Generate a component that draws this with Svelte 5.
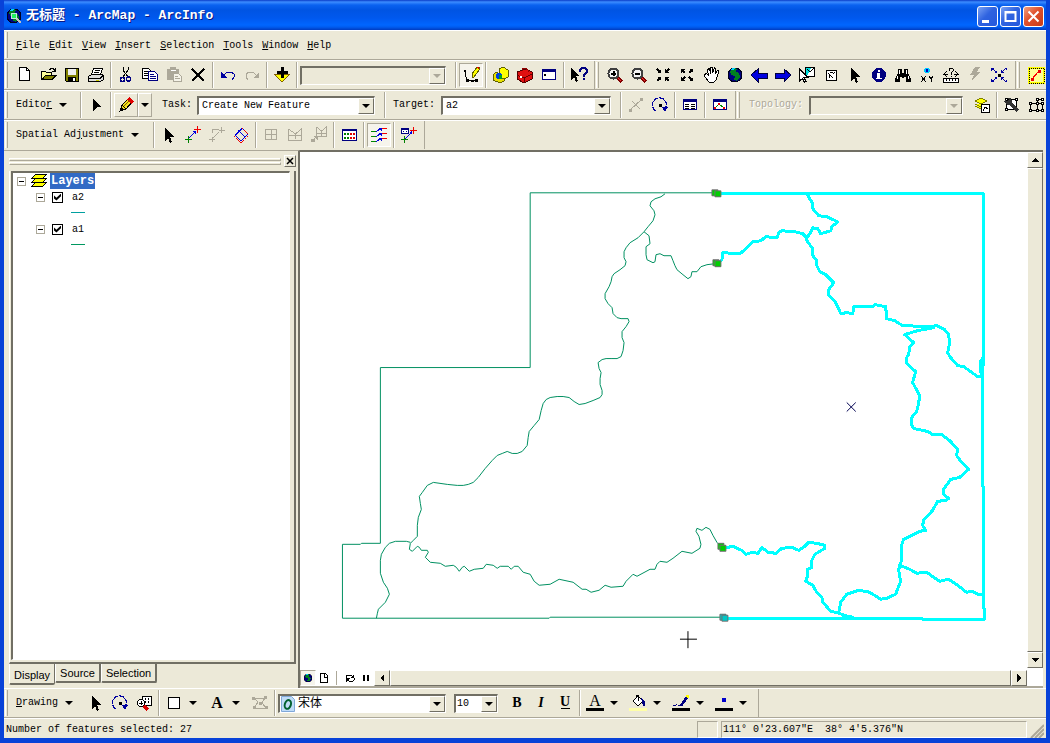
<script lang="ts">
  type Item = string | { icon: string; state?: 'pressed' | 'disabled'; drop?: boolean };

  const off = (icon: string): Item => ({ icon, state: 'disabled' });
  const on = (icon: string): Item => ({ icon, state: 'pressed' });
  const drop = (icon: string): Item => ({ icon, drop: true });

  let menus = ['File', 'Edit', 'View', 'Insert', 'Selection', 'Tools', 'Window', 'Help'];

  // '|' is a separator
  let fileTools: Item[] = ['new', 'open', 'save', 'print', '|', 'cut', 'copy', off('paste'), 'delete', '|', 'undo', off('redo'), '|', 'add', '|'];
  let windowTools: Item[] = [on('sketch'), '|', 'catalog', 'toolbox', 'command', '|', 'help'];
  let navTools: Item[] = ['zoomin', 'zoomout', 'fixedin', 'fixedout', 'pan', 'globe', 'back', 'forward', 'selectfeature', 'clear', 'pointer', 'info', 'find', 'xy', 'measure', off('hyperlink'), 'extent'];
  let adjustTools: Item[] = ['|', 'pointer', 'link', off('modify'), 'adjust', '|', off('grid'), off('edgematch'), off('edgesnap'), '|', 'linktable', '|', on('multilink'), '|', 'attrib'];
  let editTools: Item[] = ['|', off('split'), 'rotate', '|', 'attributes', '|', 'sketchprops'];
  let drawTools: Item[] = ['pointer', 'rotate', 'zoomsel', '|', drop('rect'), drop('text'), off('vertices'), '|'];
  let fontTools: Item[] = ['bold', 'italic', 'underline', '|', drop('fontcolor'), drop('fill'), drop('line'), drop('marker')];

  let layers = $state([
    { name: 'a2', visible: true, color: '#00a0a0' },
    { name: 'a1', visible: true, color: '#009860' }
  ]);
  let tabs = ['Display', 'Source', 'Selection'];
  let tab = $state('Display');

  const win = '<path d="M2 3h14v11H2z" fill="#fff"/><path d="M2.500 3.500h13v10h-13z" fill="none" stroke="#000080"/><path d="M2 3h14v3H2z" fill="#000080"/>';
  const lens = '<path d="M11 11l5 5" stroke="#800000" stroke-width="3"/><path d="M11 11l4 4" stroke="#f03030"/><circle cx="7.500" cy="7.500" r="5" fill="#f4f4f4" stroke="#404040" stroke-width="2"/>';
  const turn = '<path d="M5 15A7 7 0 1 1 14 13" fill="none" stroke="#0000a0" stroke-width="1.200" stroke-dasharray="5 1"/><path d="M11 11h6l-3 5z" fill="#0000a0"/><path d="M8 8h3v3H8z" fill="#000"/>';
  const arrow = '<path d="M5 2v13l3-3 2 5 2-1-2-5h4z" fill="#000"/>';
  const world = '<circle cx="9" cy="9" r="7" fill="#000080" stroke="#000020"/><path d="M4 5l4-3 3 1-1 3 3 1 1 4-3 4-3-1 1-4-4-1z" fill="#008020"/><path d="M4 4l3-2h3L7 4z" fill="#00d0ff"/>';

  const icons: Record<string, string> = {
    new: '<path d="M4.500 1.500h7l3 3v10h-10z" fill="#fff" stroke="#000"/><path d="M11.500 1.500v3h3" fill="none" stroke="#000"/>',
    open: '<path d="M2 5h4l1 1h6v3H6l-4 5z" fill="#ff9"/><path d="M2.500 14V5.500h4l1 1h5V9" fill="none" stroke="#000"/><path d="M3 13.500l3.500-4H17l-4 4z" fill="#808000" stroke="#000"/><path d="M10 3.500h1l1-1h2l2 2M16.500 2v3.500H13" fill="none" stroke="#000"/>',
    save: '<path d="M2.500 2.500h13v13h-12l-1-1z" fill="#808000" stroke="#000"/><path d="M5 3h8v6H5z" fill="#eee"/><path d="M5 11h8v5H5z" fill="#000"/><path d="M10 12h2v3h-2z" fill="#fff"/>',
    print: '<path d="M6.500 2.500h9l-2 6h-9z" fill="#fff" stroke="#000"/><path d="M8 4.500h5M7 6.500h5" stroke="#000"/><path d="M1.500 10.500l3-2h11l1 1v4l-3 2h-12z" fill="#ddd" stroke="#000"/><path d="M2 12.500h11l3-3" stroke="#000" fill="none"/><path d="M9 14h3" stroke="#cc0"/>',
    cut: '<path d="M6 1v3l5 7M11 1v3L6 11" stroke="#000" fill="none"/><circle cx="5.500" cy="13.500" r="2" fill="none" stroke="#000080" stroke-width="1.500"/><circle cx="11.500" cy="13" r="2" fill="none" stroke="#000080" stroke-width="1.500"/>',
    copy: '<path d="M1.500 2.500h6l3 3v7h-9z" fill="#fff" stroke="#000"/><path d="M3 5.500h4M3 7.500h5M3 9.500h5" stroke="#000"/><path d="M7.500 5.500h6l3 3v6h-9z" fill="#fff" stroke="#000080"/><path d="M9 8.500h4M9 10.500h6M9 12.500h6" stroke="#000080"/>',
    paste: '<path d="M2 3h12v11H2z" fill="#aca899"/><path d="M5 1h6v4H5z" fill="#aca899"/><path d="M6 4h5" stroke="#fff"/><path d="M8.500 7.500h5l3 3v5h-8z" fill="#f5f3e8" stroke="#aca899"/><path d="M10 10.500h3M10 12.500h5" stroke="#aca899"/>',
    delete: '<path d="M3 3l12 12M15 3L3 15" stroke="#000" stroke-width="2"/>',
    undo: '<path d="M2 6v6h6z" fill="#0000a0"/><path d="M4 10l4-4h4l3 2v3l-2 3" fill="none" stroke="#0000a0"/>',
    redo: '<path d="M16 6v6h-6z" fill="#aca899"/><path d="M14 10l-4-4H6L3 8v3l2 3" fill="none" stroke="#aca899"/>',
    add: '<path d="M1 8h16l-8 8z" fill="#ff0" stroke="#806000"/><path d="M8 1h3v4h4v3h-4v4H8V8H4V5h4z" fill="#000"/>',
    sketch: '<path d="M3 6l2 9 9-1" fill="none" stroke="#000"/><path d="M2 4h2v2H2zM4 13h3v3H4zM13 13h3v3h-3zM9 14h3v2H9z"/><path d="M10 11V8l5-7h2v3l-5 7z" fill="#ff0" stroke="#606000"/><path d="M14 1h3v3z" fill="#d00"/>',
    catalog: '<path d="M1 9l3-3 8 5v4l-4 2-7-3z" fill="#e8e000" stroke="#606000"/><path d="M7 3l4-2 5 3v7l-4 2-5-3z" fill="#ff0" stroke="#606000"/><circle cx="7" cy="10" r="3" fill="#0040e0"/><path d="M7 9h3v4H7z" fill="#00a020"/>',
    toolbox: '<path d="M1 6l9-3 6 3v7l-8 4-7-4z" fill="#e01010" stroke="#500000"/><path d="M1 9l7 3 8-4M8 12v5" stroke="#600" fill="none"/><path d="M6 5V3l3-1 3 2v2" fill="none" stroke="#900000"/><path d="M4 10h2v2H4z" fill="#fff"/>',
    command: win + '<path d="M4 8l2 1-2 1" stroke="#000" fill="none"/>',
    help: '<path d="M1 2v12l3-3 2 5 2-1-2-5h4z" fill="#000"/><path d="M10 6V4l2-2h3l2 2v2l-3 3v2" fill="none" stroke="#000080" stroke-width="2"/><path d="M13 12h2v2h-2z" fill="#000080"/>',
    zoomin: lens + '<path d="M5 7.500h5M7.500 5v5" stroke="#000" stroke-width="2"/>',
    zoomout: lens + '<path d="M5 7.500h5" stroke="#000" stroke-width="2"/>',
    fixedin: '<path d="M3 3l3 3M15 3l-3 3M3 15l3-3M15 15l-3-3" stroke="#000" stroke-width="1.500"/><path d="M3 7h4V3zM15 7h-4V3zM3 11h4v4zM15 11h-4v4z"/>',
    fixedout: '<path d="M4 4l3 3M14 4l-3 3M4 14l3-3M14 14l-3-3" stroke="#000" stroke-width="1.500"/><path d="M3 3h4L3 7zM15 3h-4l4 4zM3 15h4l-4-4zM15 15h-4l4-4z"/>',
    pan: '<path d="M2.500 8.500l2-1 2 2-1-6 2-1 1 5V1.500h2V7l2-5 1.500 1-1 5 3-4 1 1-3 9-2 2h-5l-4-5z" fill="#fff" stroke="#000"/>',
    globe: world,
    back: '<path d="M1 9l7-6v4h9v5H8v4z" fill="#0000e0" stroke="#000040"/>',
    forward: '<path d="M17 9l-7-6v4H1v5h9v4z" fill="#0000e0" stroke="#000040"/>',
    selectfeature: '<path d="M7.500 1.500h9v9h-9z" fill="#fff" stroke="#000"/><path d="M8 2h5l-4 8H8z" fill="#0dd"/><path d="M9 3l3 3 4-4" stroke="#000" fill="none"/><path d="M1.500 3v12l3-2.500 2 4 1.500-1-2-4h4z" fill="#fff" stroke="#000"/>',
    clear: '<path d="M4.500 4.500h10v10h-10z" fill="#fff" stroke="#000"/><path d="M6 7l5 5M8 6h3M11 8l2-2M7 9v3" stroke="#000" fill="none"/>',
    pointer: arrow,
    info: '<circle cx="9" cy="9" r="7" fill="#000080"/><path d="M7 7h3v6H7zM8 4h2v2H8zM6 12h6v1H6z" fill="#fff"/>',
    find: '<path d="M4 3h4v4h2V3h4v4l3 6v3h-5v-5h-2v1H8v-1H6v5H1v-3l3-6z" fill="#000"/><path d="M5 4v4M12 4v4M3 10v3M14 10v3" stroke="#fff"/>',
    xy: '<circle cx="9" cy="4.500" r="3" fill="#00c8ff"/><path d="M8 3h2v3H8z" fill="#0000c0"/><path d="M3 10l5 6M8 10l-5 6M11 10l2 3 2-3M13 13v3" stroke="#000" fill="none"/>',
    measure: '<path d="M1.500 12.500h15v4h-15z" fill="#fff" stroke="#000"/><path d="M4.500 13v2M7.500 13v2M10.500 13v2M13.500 13v2" stroke="#000"/><path d="M1 8h5M12 8h5M2 8l3-3M2 8l3 3M16 8l-3-3M16 8l-3 3M7 5V3l2-1 2 1v2L9 7v2M9 10v1" stroke="#000" fill="none"/>',
    hyperlink: '<path d="M9 1h5l-3 5h3L5 16l3-7H4z" fill="#aca899"/>',
    extent: '<path d="M3 3l4 4M15 3l-4 4M3 15l4-4M15 15l-4-4" stroke="#0000a0"/><path d="M1 2h3L1 5zM17 2h-3l3 3zM1 16h3l-3-3zM17 16h-3l3-3zM4 7h3V4zM14 7h-3V4zM4 11h3v3zM14 11h-3v3z" fill="#0000a0"/><path d="M8 8h3v3H8z" fill="#000"/>',
    editextent: '<path d="M2 2h15v15H2z" fill="#ff9"/><path d="M2 2h15v15H2z" fill="none" stroke="#ff0" stroke-width="2"/><path d="M2 2h15v15H2z" fill="none" stroke="#000" stroke-dasharray="1 1"/><path d="M5 13l7-8" stroke="#f00"/><path d="M4 12h3v3H4zM11 4h3v3h-3z" fill="#e00"/>',
    pencil: '<path d="M3 15l2-6 7-7 4 3-7 8z" fill="#f0e020" stroke="#000"/><path d="M12 1l5 4-3 3-4-4z" fill="#e00000"/><path d="M5 9l4 4" stroke="#000"/><path d="M2 16l2-5 3 3z" fill="#000"/><path d="M7 10l6-6" stroke="#806000"/>',
    editpointer: '<path d="M6 3v12l4-4h4z" fill="#000"/>',
    split: '<path d="M3 14L15 3M5 5l8 8" stroke="#aca899"/><path d="M2 13h3v3H2zM13 2h3v3h-3z" fill="#aca899"/>',
    rotate: turn,
    attributes: win + '<path d="M4 8h4M10 8h4M4 10h4M10 10h4M4 12h4M10 12h4" stroke="#000"/>',
    sketchprops: win + '<path d="M4 12l4-4 5 4" stroke="#080" fill="none"/><path d="M3 11h2v2H3zM12 11h2v2h-2zM7 7h2v2H7z" fill="#e00"/>',
    maptopo: '<path d="M2 5l6-3 6 3-6 3zM2 8l6 3 6-3M2 10l6 3 6-3" fill="#ff0" stroke="#808000"/><path d="M8.500 8.500h8v8h-8z" fill="#fff" stroke="#000"/><path d="M10 15l2-4 3 2" stroke="#000" fill="none"/>',
    fixtopo: '<path d="M3.500 3.500h10v10h-10z" fill="#fff" stroke="#000"/><path d="M2.500 2.500h2v2h-2zM12.500 2.500h2v2h-2zM12.500 12.500h2v2h-2zM2.500 12.500h2v2h-2z" fill="#fff" stroke="#000"/><path d="M5 5l10 10" stroke="#333" stroke-width="3"/><path d="M2 5l3 3 3-3-2-3" fill="none" stroke="#333" stroke-width="2"/>',
    topoedit: '<path d="M3 7h7v7H3zM10 7h5v7h-5zM10 7V3h5" fill="none" stroke="#000"/><path d="M2 6h2v2H2zM9 6h2v2H9zM14 6h2v2h-2zM2 13h2v2H2zM9 13h2v2H9zM14 13h2v2h-2zM9 2h2v2H9zM14 2h2v2h-2z" fill="#fff" stroke="#000"/>',
    link: '<path d="M4 13l8-8" stroke="#0000e0"/><path d="M12 5v4L8 5z" fill="#0000e0"/><path d="M1 13h7v1H1zM4 10h1v7H4z" fill="#008000"/><path d="M10 3h7v1h-7zM13 0h1v7h-1z" fill="#f00000"/>',
    modify: '<path d="M4 13l7-7M4 7V4l3-1h4" stroke="#aca899" fill="none"/><path d="M1 13.500h6M4.500 11v5M11 4.500h6M13.500 1v6" stroke="#aca899"/>',
    adjust: '<path d="M3 9l7-7 6 6-7 7z" fill="none" stroke="#0000e0"/><path d="M2 11l8-8M6 4l7 7" stroke="#0000e0"/><path d="M10 2l6 6M2 10l7 7 7-7" fill="none" stroke="#e00" stroke-dasharray="2 1"/>',
    grid: '<path d="M3.500 3.500h11v10h-11zM3 8.500h11M9 4v9" fill="none" stroke="#aca899"/>',
    edgematch: '<path d="M2.500 3v11h13V3l-6 5-7-5M9.500 8v5M3 9h12" fill="none" stroke="#aca899"/>',
    edgesnap: '<path d="M6.500 1v9h10V1l-5 4-5-4M11.500 5v5M7 7h9M2 15l5-5" fill="none" stroke="#aca899"/><path d="M3 10h5v5zM1 13h4v3H1z" fill="#aca899"/>',
    linktable: '<path d="M2 3h15v12H2z" fill="#fff"/><path d="M2.500 3.500h14v11h-14z" fill="none" stroke="#000080"/><path d="M2 3h15v2H2z" fill="#000080"/><path d="M4 7h2v2H4zM4 11h2v2H4zM7 7h2v2H7zM7 11h2v2H7z" fill="#008000"/><path d="M10 7h2v2h-2zM10 11h2v2h-2zM13 7h2v2h-2zM13 11h2v2h-2z" fill="#e00000"/>',
    multilink: '<path d="M1 5.500h5M1 10.500h5M1 15.500h5" stroke="#080"/><path d="M12 2.500h5M12 7.500h5M12 12.500h5" stroke="#e00"/><path d="M6 6l5-4M6 11l5-4M6 16l5-4" stroke="#0000e0"/><path d="M8 2h4v3zM8 7h4v3zM8 12h4v3z" fill="#0000e0"/>',
    attrib: '<path d="M1.500 2.500h7v5h-7z" fill="#fff" stroke="#000080"/><path d="M1 2h8v2H1zM3 5h1v1H3zM6 5h1v1H6z" fill="#000080"/><path d="M5 13l7-7" stroke="#0000e0"/><path d="M12 5v4L9 6z" fill="#0000e0"/><path d="M1 13h7v1H1zM4 10h1v7H4z" fill="#008000"/><path d="M10 4h7v1h-7zM13 1h1v7h-1z" fill="#f00000"/>',
    zoomsel: '<path d="M7.500 2.500h9v9h-9z" fill="#fff" stroke="#000"/><path d="M10 5h1M13 5h1M13 8h1M10 8h1" stroke="#000" stroke-width="2"/><path d="M9 12l4 4" stroke="#d00" stroke-width="3"/><circle cx="6" cy="9" r="3.500" fill="#fff" stroke="#000"/><path d="M4 9h4M6 7v4" stroke="#000"/>',
    rect: '<path d="M3.500 3.500h11v11h-11z" fill="#fff" stroke="#000"/>',
    text: '<text x="9" y="14" text-anchor="middle" class="glyph heavy">A</text>',
    vertices: '<path d="M3 4h11l-3 5 4 5H3l4-6z" fill="none" stroke="#aca899"/><path d="M1 3h3v3H1zM13 2h3v3h-3zM14 12h3v3h-3zM2 12h3v3H2zM8 8h3v3H8z" fill="#aca899"/>',
    bold: '<text x="9" y="13" text-anchor="middle" class="glyph heavy small">B</text>',
    italic: '<text x="9" y="13" text-anchor="middle" class="glyph heavy small slant">I</text>',
    underline: '<text x="9" y="12" text-anchor="middle" class="glyph heavy small">U</text><path d="M5 14.500h9" stroke="#000"/>',
    fontcolor: '<text x="9" y="12" text-anchor="middle" class="glyph">A</text><path d="M0 14h18v3H0z"/>',
    fill: '<path d="M4 7l5-5 5 5-5 5z" fill="#fff" stroke="#000"/><path d="M9 7V1H7v3" fill="none" stroke="#000"/><path d="M12 4l4 3v5h-2z" fill="#000080"/><path d="M0 14h18v3H0z" fill="#ffffa8"/>',
    line: '<path d="M8 11l6-9 3 1-6 8-3 1z" fill="#000080"/><path d="M14 1h3v3h-2z" fill="#ff0"/><path d="M1 11h3l1-1M6 11h5" stroke="#000080" fill="none"/><path d="M0 14h18v3H0z"/>',
    marker: '<circle cx="9" cy="6" r="2.500" fill="#00c"/><path d="M0 14h18v3H0z"/>',
    layers: '<path d="M1.500 14.500l4-4h11l-4 4z" fill="#ff0" stroke="#000"/><path d="M1.500 10.500l4-4h11l-4 4z" fill="#ff0" stroke="#000"/><path d="M1.500 6.500l4-4h11l-4 4z" fill="#ff0" stroke="#000"/>',
    page: '<path d="M5.500 4.500h5l2 2v7h-7z" fill="#fff" stroke="#000"/><path d="M9.500 5v3h3" fill="none" stroke="#000"/>',
    refresh: '<path d="M5 9V7l1-1h4l2 2M13 9v2l-1 1H8l-2-2" fill="none" stroke="#000"/><path d="M13 5v4H9zM5 13V9h4z"/>',
    pause: '<path d="M6 6h2v6H6zM10 6h2v6h-2z"/>',
    up: '<path d="M5 11h8L9 7z"/>',
    down: '<path d="M5 7h8l-4 4z"/>',
    left: '<path d="M11 5v8L7 9z"/>',
    right: '<path d="M7 5v8l4-4z"/>'
  };

  // unselected boundaries and rivers
  const lines = [
    '717,192 530,192 530,367 380,367 380,543 361,543 360,544 342,544 342,618 549,618 550,617 722,617',
    '665,193 661,196 655,198 651,201 650,205 654,210 655,214 653,220 648,226 644,231 638,237 630,242 626,247 624,251 624,257 626,261 625,265 620,269 614,273 612,276 611,281 609,286 605,293 605,298 608,303 612,307 613,313 617,317 621,318 628,318 629,321 626,326 622,331 622,337 624,342 623,350 621,356 617,358 611,358 606,358 602,359 598,362 599,368 601,372 600,378 600,384 602,390 602,394 600,397 593,400 585,403 579,404 574,401 569,397 563,396 557,396 550,397 546,399 543,403 541,410 539,419 534,425 529,431 528,437 527,445 522,451 517,453 512,453 507,451 502,453 497,455 492,460 485,468 478,477 473,482 468,484 463,485 457,485 447,484 433,482 427,485 422,492 419,496 420,503 421,509 418,517 417,525 417,536 413,540 410,543',
    '410,542 406,541 395,541 389,543 385,547 381,554 380,560 380,573 383,582 387,588 389,594 385,602 378,609 377,613 376,618',
    '410,543 409,549 412,551 417,546 419,547 421,550 427,550 428,552 425,557 430,562 440,563 445,566 453,565 456,567 459,571 462,567 464,566 469,571 474,569 483,568 486,564 493,565 497,568 500,566 508,566 511,569 514,566 518,566 523,572 530,574 534,581 539,585 550,584 559,579 573,582 582,589 586,589 591,592 599,590 605,585 611,587 623,586 626,581 633,574 637,576 650,569 655,569 657,564 660,561 667,562 673,558 682,551 692,553 700,548 701,544 699,536 696,531 697,528 702,530 706,527 710,529 713,535 717,542 721,546',
    '644,231 649,235 650,243 646,246 646,254 647,259 653,262 655,261 656,254 660,253 664,255 671,255 673,260 675,265 677,269 683,274 688,278 691,276 692,271 697,271 701,266 707,264 715,263'
  ];

  // selected features
  const selected = [
    '718,193 984,193 984,355 983,375 983,485 984,487 984,607 985,610 985,619 923,619 922,618 724,618',
    '807,193 813,203 813,208 819,215 827,216 838,221 832,226 831,230 821,233 818,228 813,227 810,233 807,237',
    '717,263 722,259 723,252 740,253 745,249 753,241 761,240 766,236 777,237 779,232 782,230 795,231 803,233 807,237 807,240 813,248 813,255 817,260 817,265 820,271 826,274 834,282 829,289 829,295 836,302 841,313 847,312 853,313 854,306 873,306 875,304 886,306 887,318 895,320 903,325 930,326 937,325 945,329 949,334 950,343 948,352 951,357 958,365 964,366 971,371 978,376 983,376 981,371 981,361 984,356',
    '935,327 918,330 905,334 914,342 910,346 909,354 907,357 907,363 916,371 913,382 920,395 919,403 917,411 912,417 912,424 914,428 928,431 933,434 942,434 951,441 958,449 957,455 962,462 969,469 960,477 951,479 944,489 944,494 949,498 946,500 938,501 933,510 924,520 923,525 926,530 920,531 904,539 902,545 902,560 900,565 899,570 901,581 896,594 887,598 881,599 870,592 859,590 847,594 841,602 839,612',
    '723,547 728,547 733,546 737,548 742,550 746,554 752,552 758,553 762,547 768,552 776,553 782,548 792,547 799,550 805,546 809,542 817,543 825,545 825,548 815,554 812,560 812,567 808,569 808,575 806,581 813,585 817,592 822,597 823,602 831,611 839,613 848,616 853,617 842,616',
    '900,565 910,569 917,573 927,572 934,577 940,581 949,579 958,585 967,592 973,591 978,594 983,594'
  ];

  const vertices = [
    { x: 712, y: 189, dx: 3, dy: 1, color: '#00d000' },
    { x: 713, y: 259, dx: 2, dy: 1, color: '#00d000' },
    { x: 718, y: 543, dx: 2, dy: 2, color: '#00d000' },
    { x: 720, y: 614, dx: 2, dy: 1, color: '#00c8c8' }
  ];
</script>

{#snippet icon(name: string)}
  <svg class="icon" viewBox="0 0 18 18" aria-hidden="true">{@html icons[name]}</svg>
{/snippet}

{#snippet tools(items: Item[])}
  {#each items as item}
    {#if item === '|'}
      <span class="sep"></span>
    {:else if typeof item === 'string'}
      <button class="tool" aria-label={item}>{@render icon(item)}</button>
    {:else}
      <button class="tool" class:pressed={item.state === 'pressed'} disabled={item.state === 'disabled'} aria-label={item.icon}>
        {@render icon(item.icon)}
      </button>
      {#if item.drop}
        <button class="drop" aria-label="{item.icon} options"><span class="caret"></span></button>
      {/if}
    {/if}
  {/each}
{/snippet}

{#snippet combo(id: string, value: string, size: string, disabled: boolean, label: string)}
  <span class="combo {size}" class:off={disabled}>
    <select {id} {disabled} aria-label={label}><option>{value}</option></select>
    <span class="combo-arrow"><span class="caret"></span></span>
  </span>
{/snippet}

<div class="window">
  <header class="titlebar">
    <svg class="icon" viewBox="0 0 18 18" aria-hidden="true">
      {@html world}
      <path d="M10 10l6 6" stroke="#c0c0c0" stroke-width="2" />
      <circle cx="9" cy="9" r="3" fill="#20f060" stroke="#c0e0e0" />
    </svg>
    <h1>无标题 - ArcMap - ArcInfo</h1>
    <button class="caption" aria-label="Minimize">
      <svg viewBox="0 0 19 19"><path d="M4 13h7v3H4z" fill="#fff" /></svg>
    </button>
    <button class="caption" aria-label="Maximize">
      <svg viewBox="0 0 19 19"><path d="M4.500 5h10v9h-10zM4 5.500h11" fill="none" stroke="#fff" stroke-width="2" /></svg>
    </button>
    <button class="caption close" aria-label="Close">
      <svg viewBox="0 0 19 19"><path d="M4.500 4.500l10 10M14.500 4.500l-10 10" stroke="#fff" stroke-width="2" /></svg>
    </button>
  </header>

  <nav class="row">
    <div class="bar menu last">
      {#each menus as menu}
        <button><u>{menu[0]}</u>{menu.slice(1)}</button>
      {/each}
    </div>
  </nav>

  <div class="row">
    <div class="bar">
      {@render tools(fileTools)}
      {@render combo('scale', '', 'scale', true, 'Map scale')}
      <span class="sep"></span>
      {@render tools(windowTools)}
    </div>
    <div class="bar tight">
      {@render tools(navTools)}
    </div>
    <div class="bar last">
      {@render tools(['editextent'])}
    </div>
  </div>

  <div class="row">
    <div class="bar">
      <button class="textbtn editor"><span>Edito<u>r</u></span><span class="caret"></span></button>
      {@render tools(['|', 'editpointer', '|'])}
      <button class="tool raised" aria-label="Sketch tool">{@render icon('pencil')}</button>
      <button class="drop raised" aria-label="Sketch tool options"><span class="caret"></span></button>
      <label for="task">Task:</label>
      {@render combo('task', 'Create New Feature', 'task', false, 'Task')}
      <span class="sep"></span>
      <label class="near" for="target">Target:</label>
      {@render combo('target', 'a2', 'target', false, 'Target')}
      {@render tools(editTools)}
    </div>
    <div class="bar last">
      <label class="dim" for="topology">Topology:</label>
      {@render combo('topology', '', 'topology', true, 'Topology')}
      {@render tools(['maptopo', '|', 'fixtopo', 'topoedit'])}
    </div>
  </div>

  <div class="row open">
    <div class="bar">
      <button class="textbtn spatial"><span>Spatial Ad<u>j</u>ustment</span><span class="caret"></span></button>
      {@render tools(adjustTools)}
    </div>
  </div>

  <main>
    <aside>
      <div class="pane-head">
        <div class="grip"><i></i><i></i></div>
        <button aria-label="Close pane">
          <svg viewBox="0 0 10 10"><path d="M2 2l6 6M8 2L2 8" stroke="#000" stroke-width="1.500" /></svg>
        </button>
      </div>
      <div class="frame">
        <div class="tree">
          <div class="node">
            <button class="expander" aria-label="Collapse Layers"></button>
            {@render icon('layers')}
            <strong>Layers</strong>
          </div>
          {#each layers as layer}
            <div class="node child">
              <button class="expander" aria-label="Collapse {layer.name}"></button>
              <label>
                <input type="checkbox" bind:checked={layer.visible} />
                <span>{layer.name}</span>
              </label>
            </div>
            <div class="symbol">
              <svg viewBox="0 0 14 16"><path d="M0 7.500h14" stroke={layer.color} /></svg>
            </div>
          {/each}
        </div>
      </div>
      <div class="tabs">
        {#each tabs as name}
          <button class:active={tab === name} onclick={() => (tab = name)}>{name}</button>
        {/each}
      </div>
    </aside>

    <section class="view">
      <div class="canvas">
        <svg class="map" viewBox="300 152 728 518" aria-label="Map">
          <g transform="translate(0.500 0.500)" fill="none" stroke-linejoin="round">
            {#each lines as points}
              <polyline {points} stroke="#009060" />
            {/each}
            {#each selected as points}
              <polyline {points} stroke="#00ffff" stroke-width="3" />
            {/each}
            {#each vertices as v}
              <g fill={v.color} stroke="#707070">
                <rect x={v.x} y={v.y} width="6" height="6" />
                <rect x={v.x + v.dx} y={v.y + v.dy} width="6" height="6" />
              </g>
            {/each}
            <path d="M847 402l9 9M856 402l-9 9" stroke="#000050" />
            <path d="M680 639h17M688 631v17" stroke="#000" />
          </g>
        </svg>
      </div>
      <div class="vscroll">
        <button class="raised" aria-label="Scroll up">{@render icon('up')}</button>
        <div class="thumb"></div>
        <button class="raised" aria-label="Scroll down">{@render icon('down')}</button>
      </div>
      <div class="hscroll">
        <button class="pressed" aria-label="Data view">{@render icon('globe')}</button>
        <button aria-label="Layout view">{@render icon('page')}</button>
        <span class="sep"></span>
        <button aria-label="Refresh">{@render icon('refresh')}</button>
        <button aria-label="Pause drawing">{@render icon('pause')}</button>
        <button class="raised" aria-label="Scroll left">{@render icon('left')}</button>
        <div class="thumb"></div>
        <button class="raised" aria-label="Scroll right">{@render icon('right')}</button>
      </div>
    </section>
  </main>

  <div class="row">
    <div class="bar">
      <button class="textbtn drawing"><span><u>D</u>rawing</span><span class="caret"></span></button>
      {@render tools(drawTools)}
      <span class="combo font">
        <select aria-label="Font"><option>宋体</option></select>
        <svg class="font-badge" viewBox="0 0 14 16" aria-hidden="true">
          <path d="M.5 .5h10l3 3v12H.5z" fill="#c0dcf8" stroke="#80a8d8" />
          <ellipse cx="7" cy="8.500" rx="3" ry="4.500" fill="none" stroke="#006030" stroke-width="2" transform="rotate(18 7 8)" />
        </svg>
        <span class="combo-arrow"><span class="caret"></span></span>
      </span>
      {@render combo('size', '10', 'size', false, 'Font size')}
      {@render tools(fontTools)}
    </div>
  </div>

  <footer>
    <span class="message">Number of features selected: 27</span>
    <span class="cell"></span>
    <span class="cell coords">111° 0'23.607"E  38° 4'5.376"N</span>
    <svg class="sizer" viewBox="0 0 14 14" aria-hidden="true">
      <path d="M1 14L14 1M5 14l9-9M9 14l5-5" stroke="#aca899" stroke-width="2" />
    </svg>
  </footer>
</div>

<style>
  :global(body) {
    background: #0040d8;
  }

  .window {
    --face: #ece9d8;
    --shade: #aca899;
    --dark: #716f64;
    display: flex;
    flex-direction: column;
    box-sizing: border-box;
    height: 100vh;
    border: solid #0842d8;
    border-width: 0 4px 5px;
    background: var(--face);
    font: 10px/16px 'Liberation Mono', 'Noto Sans CJK SC', monospace;
    color: #000;
    overflow: hidden;
  }

  button {
    box-sizing: border-box;
    flex: none;
    padding: 0;
    border: 1px solid transparent;
    background: none;
    font: inherit;
    color: inherit;
  }

  .icon {
    display: block;
    flex: none;
    width: 18px;
    height: 18px;
    overflow: visible;
    shape-rendering: crispEdges;
  }

  .icon :global(.glyph) {
    font: 16px 'Liberation Serif', serif;
  }

  .icon :global(.heavy) {
    font-weight: bold;
  }

  .icon :global(.small) {
    font-size: 14px;
  }

  .icon :global(.slant) {
    font-style: italic;
  }

  .titlebar {
    display: flex;
    flex: none;
    align-items: center;
    gap: 2px;
    height: 30px;
    margin: 0 -4px;
    padding: 2px 6px 0 5px;
    box-sizing: border-box;
    background: linear-gradient(#0a3cc8 0, #3c8cff 2px, #0a62f0 5px, #0054e3 10px, #0058ee 18px, #0066ff 25px, #005cf0 27px, #003cc0 30px);
    color: #fff;

    & h1 {
      flex: 1;
      margin: 0 0 0 1px;
      font: bold 13px/20px 'Liberation Mono', 'Noto Sans CJK SC', monospace;
      text-shadow: 1px 1px #0a1883;
    }
  }

  .caption {
    width: 21px;
    height: 21px;
    border: 1px solid #fff;
    border-radius: 3px;
    background: linear-gradient(135deg, #7aa2f4, #2f63e0 45%, #2458dc);

    & svg {
      display: block;
    }

    &.close {
      background: linear-gradient(135deg, #f0a080, #e0502c 45%, #c83c18);
    }
  }

  .row {
    display: flex;
    flex: none;
    box-sizing: border-box;
    height: 30px;
    border-top: 1px solid #fff;
    border-bottom: 1px solid var(--shade);
    overflow: hidden;

    &.open {
      border-bottom-color: var(--face);
    }
  }

  .bar {
    display: flex;
    flex: none;
    align-items: center;
    padding: 0 3px 0 5px;
    border-right: 1px solid var(--shade);

    &::before {
      content: '';
      align-self: stretch;
      flex: none;
      width: 1px;
      margin: 1px 4px 1px -4px;
      border: solid;
      border-width: 0 1px;
      border-color: #fff var(--shade) #fff #fff;
    }

    &.tight {
      padding-right: 4px;
    }

    &.last {
      border-right: 0;
    }
  }

  .menu {
    gap: 9px;

    & button {
      padding-top: 2px;
      border: 0;
    }

    & button:first-of-type {
      margin-left: -5px;
    }
  }

  .sep {
    flex: none;
    box-sizing: border-box;
    width: 2px;
    height: 26px;
    margin: 0 2px;
    border-left: 1px solid var(--shade);
    border-right: 1px solid #fff;
  }

  .tool {
    display: flex;
    align-items: center;
    justify-content: center;
    width: 24px;
    height: 24px;
  }

  .pressed {
    border-color: var(--shade) #fff #fff var(--shade);
    background: #f6f4ec;
  }

  .raised {
    border-color: #fff var(--shade) var(--shade) #fff;
  }

  .drop {
    display: flex;
    align-items: center;
    justify-content: center;
    width: 14px;
    height: 24px;
    margin-right: 5px;
  }

  .caret {
    flex: none;
    border: 4px solid transparent;
    border-top-color: #000;
    border-bottom: 0;
  }

  .textbtn {
    display: flex;
    align-items: center;
    gap: 7px;
    height: 24px;
    padding-left: 3px;

    &.editor {
      width: 66px;
    }

    &.spatial {
      width: 139px;
    }

    &.drawing {
      width: 72px;
    }
  }

  .bar > label {
    margin: 0 5px;

    &.near {
      margin-right: 6px;
    }

    &.dim {
      margin-right: 6px;
      color: var(--shade);
      text-shadow: 1px 1px #fff;
    }
  }

  .combo {
    display: grid;
    flex: none;
    box-sizing: border-box;
    height: 19px;
    border: solid;
    border-width: 2px 1px 1px 2px;
    border-color: var(--dark) #fff #fff var(--dark);
    background: #fff;

    & select {
      grid-area: 1 / 1;
      appearance: none;
      min-width: 0;
      width: 100%;
      padding: 0 16px 0 3px;
      border: 0;
      background: none;
      font: inherit;
      color: #000;
    }

    &.off {
      background: var(--face);
    }

    &.scale {
      width: 146px;
      margin-right: 7px;
    }

    &.task {
      width: 178px;
      margin-right: 7px;
    }

    &.target {
      width: 170px;
      margin-right: 7px;
    }

    &.topology {
      width: 154px;
      margin-right: 7px;
    }

    &.font {
      width: 168px;
      margin-right: 8px;

      & select {
        padding-left: 18px;
        font-size: 12px;
      }
    }

    &.size {
      width: 44px;
      margin-right: 7px;

      & select {
        padding-left: 1px;
      }
    }
  }

  .combo-arrow {
    display: flex;
    grid-area: 1 / 1;
    align-items: center;
    justify-content: center;
    justify-self: end;
    box-sizing: border-box;
    width: 16px;
    border: 1px solid;
    border-color: #fff var(--dark) var(--dark) #fff;
    background: var(--face);
    pointer-events: none;
  }

  .off .caret {
    border-top-color: var(--shade);
  }

  .font-badge {
    grid-area: 1 / 1;
    width: 14px;
    height: 16px;
    margin-left: 1px;
    pointer-events: none;
  }

  main {
    display: flex;
    flex: 1;
    min-height: 0;
  }

  aside {
    display: flex;
    flex: none;
    flex-direction: column;
    box-sizing: border-box;
    width: 296px;
    padding: 0 2px 3px 5px;
    border-top: 1px solid var(--shade);
    border-right: 2px solid var(--dark);
  }

  .pane-head {
    display: flex;
    align-items: center;
    gap: 3px;
    height: 20px;

    & .grip {
      display: grid;
      flex: 1;
      gap: 1px;
    }

    & i {
      height: 1px;
      border: 1px solid;
      border-color: #fff var(--shade) var(--shade) #fff;
    }

    & button {
      width: 12px;
      height: 12px;
      border-color: #fff var(--dark) var(--dark) #fff;
    }

    & svg {
      display: block;
    }
  }

  .frame {
    display: flex;
    flex: 1;
    min-height: 0;
    padding: 0 4px 2px 1px;
    border: solid;
    border-width: 0 2px 2px 1px;
    border-color: #fff var(--dark) var(--dark) #fff;
  }

  .tree {
    flex: 1;
    border: solid;
    border-width: 2px 1px 1px 2px;
    border-color: var(--dark) #fff #fff var(--dark);
    background: #fff;
  }

  .node {
    display: flex;
    align-items: center;
    height: 16px;
    padding-left: 4px;

    &.child {
      padding-left: 23px;
    }

    & .icon {
      margin: 0 2px 0 4px;
    }

    & strong {
      padding: 0 1px;
      background: #316ac5;
      color: #fff;
      font-size: 12px;
    }

    & label {
      display: flex;
      align-items: center;
      gap: 9px;
    }

    & span {
      padding-top: 2px;
    }

    & input {
      display: grid;
      place-items: center;
      appearance: none;
      width: 11px;
      height: 11px;
      margin: 0 0 0 7px;
      border: 1px solid #000;
      box-sizing: border-box;
      background: #fff;
    }

    & input:checked::before {
      content: '';
      width: 7px;
      height: 7px;
      background: #000;
      clip-path: polygon(0 30%, 35% 60%, 100% 0, 100% 40%, 35% 100%, 0 70%);
    }
  }

  .expander {
    width: 9px;
    height: 9px;
    border-color: var(--shade);
    background: linear-gradient(#000, #000) center / 5px 1px no-repeat;
  }

  .symbol {
    height: 16px;
    padding-left: 58px;

    & svg {
      display: block;
      width: 14px;
      height: 16px;
    }
  }

  .tabs {
    display: flex;
    align-items: flex-start;
    height: 21px;
    font: 11px/16px 'Liberation Sans', sans-serif;

    & button {
      height: 19px;
      padding: 0 4px;
      border: solid;
      border-width: 0 2px 2px 1px;
      border-color: #fff var(--dark) var(--dark) #fff;
      border-radius: 0 0 2px 2px;
    }

    & .active {
      height: 21px;
      padding-top: 2px;
      border-right-width: 1px;
    }
  }

  .view {
    display: grid;
    flex: 1;
    grid-template-columns: 1fr 16px;
    grid-template-rows: 1fr 16px;
    min-width: 0;
    margin-right: 3px;
    border-top: 2px solid var(--dark);
    border-bottom: 2px solid var(--shade);
    background: #fff;
  }

  .canvas {
    min-width: 0;
    min-height: 0;
    overflow: hidden;
  }

  .map {
    display: block;
    width: 100%;
    height: 100%;
    shape-rendering: crispEdges;
  }

  .vscroll,
  .hscroll {
    display: flex;
    min-width: 0;
    min-height: 0;
    background: #fff;

    & button {
      display: flex;
      align-items: center;
      justify-content: center;
      width: 16px;
      height: 16px;
    }

    & .raised {
      border-color: #fff var(--dark) var(--dark) #fff;
      background: var(--face);
    }
  }

  .vscroll {
    flex-direction: column;
    padding-bottom: 2px;
  }

  .hscroll .sep {
    height: 14px;
    margin: 1px 4px;
  }

  .hscroll .pressed .icon {
    width: 10px;
    height: 10px;
  }

  .thumb {
    flex: 1;
    border: 1px solid;
    border-color: #fff var(--dark) var(--dark) #fff;
    background: var(--face);
  }

  footer {
    display: flex;
    flex: none;
    align-items: center;
    gap: 3px;
    box-sizing: border-box;
    height: 20px;
    padding: 2px 2px 0;
    border-top: 1px solid #fff;
  }

  .message {
    flex: 1;
  }

  .cell {
    box-sizing: border-box;
    width: 21px;
    height: 17px;
    border: 1px solid;
    border-color: var(--shade) #fff #fff var(--shade);

    &.coords {
      width: 306px;
      padding-left: 1px;
      white-space: pre;
    }
  }

  .sizer {
    align-self: end;
    width: 14px;
    height: 14px;
  }
</style>
